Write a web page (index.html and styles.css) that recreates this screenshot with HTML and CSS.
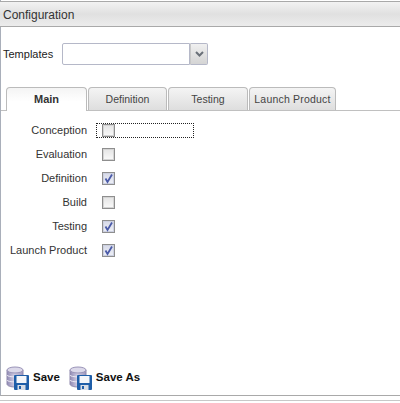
FILE: index.html
```html
<!DOCTYPE html>
<html lang="en">
<head>
  <meta charset="UTF-8">
  <title>Configuration</title>
  <link rel="stylesheet" href="styles.css">
</head>
<body>
  <div class="panel">
    <div class="panel-title">Configuration</div>

    <div class="templates-row">
      <label class="templates-label">Templates</label>
      <div class="combo">
        <div class="combo-text"></div>
        <div class="combo-btn">
          <svg width="9" height="6" viewBox="0 0 9 6"><path d="M1 1 L4.5 4.5 L8 1" fill="none" stroke="#6a7078" stroke-width="2"/></svg>
        </div>
      </div>
    </div>

    <div class="tabs">
      <div class="tab tab-active">Main</div>
      <div class="tab tab-definition">Definition</div>
      <div class="tab tab-testing">Testing</div>
      <div class="tab tab-launch">Launch Product</div>
    </div>

    <div class="form">
      <div class="form-row">
        <span class="form-label">Conception</span>
        <span class="check-wrap check-focus"><span class="check"></span></span>
      </div>
      <div class="form-row">
        <span class="form-label">Evaluation</span>
        <span class="check-wrap"><span class="check"></span></span>
      </div>
      <div class="form-row">
        <span class="form-label">Definition</span>
        <span class="check-wrap"><span class="check check-on"><svg class="tick" width="11" height="11" viewBox="0 0 11 11"><path d="M2.5 5.5 L4.5 9 L9 1.5" fill="none" stroke="#4a5aa8" stroke-width="1.8"/></svg></span></span>
      </div>
      <div class="form-row">
        <span class="form-label">Build</span>
        <span class="check-wrap"><span class="check"></span></span>
      </div>
      <div class="form-row">
        <span class="form-label">Testing</span>
        <span class="check-wrap"><span class="check check-on"><svg class="tick" width="11" height="11" viewBox="0 0 11 11"><path d="M2.5 5.5 L4.5 9 L9 1.5" fill="none" stroke="#4a5aa8" stroke-width="1.8"/></svg></span></span>
      </div>
      <div class="form-row">
        <span class="form-label">Launch Product</span>
        <span class="check-wrap"><span class="check check-on"><svg class="tick" width="11" height="11" viewBox="0 0 11 11"><path d="M2.5 5.5 L4.5 9 L9 1.5" fill="none" stroke="#4a5aa8" stroke-width="1.8"/></svg></span></span>
      </div>
    </div>

    <div class="toolbar">
      <div class="tool-btn">
        <svg width="24" height="24" viewBox="0 0 24 24">
          <defs>
            <linearGradient id="dbBody" x1="0" x2="1" y1="0" y2="0">
              <stop offset="0" stop-color="#8f89b4"/>
              <stop offset="0.45" stop-color="#cfcbe2"/>
              <stop offset="1" stop-color="#9c96bd"/>
            </linearGradient>
          </defs>
          <path d="M1 4 V18 C1 20 5 21 9 21 C13 21 17 20 17 18 V4" fill="url(#dbBody)" stroke="#8f89ad"/>
          <ellipse cx="9" cy="4" rx="8" ry="3" fill="#dcd9ea" stroke="#9a94b8"/>
          <path d="M1 9 C1 11.5 17 11.5 17 9 M1 14 C1 16.5 17 16.5 17 14" fill="none" stroke="#eceaf4"/>
          <rect x="8" y="9" width="15" height="15" rx="1" fill="#1f5ea8"/>
          <rect x="10.5" y="10" width="10" height="7" fill="#f4f6fa"/>
          <rect x="11.5" y="19" width="8" height="5" fill="#d8dde6"/>
          <rect x="13" y="20" width="2" height="3" fill="#1f5ea8"/>
        </svg>
        <span>Save</span>
      </div>
      <div class="tool-btn">
        <svg width="24" height="24" viewBox="0 0 24 24">
          <path d="M1 4 V18 C1 20 5 21 9 21 C13 21 17 20 17 18 V4" fill="url(#dbBody)" stroke="#8f89ad"/>
          <ellipse cx="9" cy="4" rx="8" ry="3" fill="#dcd9ea" stroke="#9a94b8"/>
          <path d="M1 9 C1 11.5 17 11.5 17 9 M1 14 C1 16.5 17 16.5 17 14" fill="none" stroke="#eceaf4"/>
          <rect x="8" y="9" width="15" height="15" rx="1" fill="#1f5ea8"/>
          <rect x="10.5" y="10" width="10" height="7" fill="#f4f6fa"/>
          <rect x="11.5" y="19" width="8" height="5" fill="#d8dde6"/>
          <rect x="13" y="20" width="2" height="3" fill="#1f5ea8"/>
        </svg>
        <span>Save As</span>
      </div>
    </div>
  </div>
  <div class="page-rule"></div>
</body>
</html>
```

FILE: styles.css
```css
/* ExtJS-style config panel */
html, body {
  margin: 0;
  height: 100%;
  background: #fff;
}

body {
  font-family: "Liberation Sans", Arial, sans-serif;
  font-size: 11px;
  color: #222;
  overflow: hidden;
}

.panel {
  height: 394px;
  padding-top: 1px;
  border-left: 1px solid #a9afba;
  border-bottom: 1px solid #a9a9a9;
  display: flex;
  flex-direction: column;
}

.page-rule {
  margin-top: 4px;
  height: 1px;
  background: #c8c8c8;
}

.panel-title {
  height: 24px;
  line-height: 26px;
  margin-left: -1px;
  padding-left: 3px;
  border-top: 1px solid #a9a9a9;
  border-bottom: 1px solid #a9a9a9;
  background: linear-gradient(#f2f2f2, #e0e0e0 50%, #ececec);
  font-size: 12px;
  color: #333;
}

.templates-row {
  display: flex;
  align-items: center;
  margin-top: 16px;
  padding-left: 2px;
}

.templates-label {
  width: 59px;
}

.combo {
  display: flex;
  width: 146px;
  height: 22px;
}

.combo-text {
  flex: 1;
  border: 1px solid #b5b8c8;
  border-radius: 2px 0 0 2px;
  background: #fff;
}

.combo-btn {
  width: 16px;
  border: 1px solid #b5b8c8;
  border-left: 1px solid #c8c8c8;
  border-radius: 0 2px 2px 0;
  background: linear-gradient(#f0f0f0, #d4d4d4);
  display: flex;
  align-items: center;
  justify-content: center;
}

.tabs {
  display: flex;
  margin-top: 22px;
  padding-left: 5px;
  height: 23px;
  border-bottom: 1px solid #c0c0c0;
  gap: 1px;
}

.tab {
  height: 22px;
  line-height: 22px;
  text-align: center;
  border: 1px solid #bbb;
  border-bottom: none;
  border-radius: 4px 4px 0 0;
  background: linear-gradient(#f4f4f4, #dedede);
  font-size: 10.5px;
  color: #444;
}

.tab-active {
  width: 79px;
  height: 23px;
  background: linear-gradient(#f4f4f4, #fff 60%);
  font-weight: bold;
  font-size: 11px;
  color: #333;
}

.tab-definition { width: 77px; }
.tab-testing { width: 78px; }
.tab-launch { width: 85px; letter-spacing: .2px; }

.form {
  padding-top: 7px;
  flex: 1;
}

.form-row {
  display: flex;
  align-items: center;
  height: 24px;
}

.form-label {
  width: 86px;
  text-align: right;
  color: #333;
}

.check-wrap {
  display: flex;
  align-items: center;
  margin-left: 9px;
  width: 98px;
  height: 15px;
  padding-left: 5px;
  box-sizing: border-box;
  border: 1px solid transparent;
}

.check-focus {
  border: 1px dotted #222;
}

.check {
  width: 11px;
  height: 11px;
  border: 1px solid #8e8e8e;
  background: linear-gradient(#e4e4e4, #fafafa);
  box-shadow: inset 0 0 0 1px #d4d4d4;
  display: block;
}

.check-on {
  background: linear-gradient(#d6d9e8, #eef0f6);
  box-shadow: inset 0 0 0 1px #ccd0e0;
}

.tick {
  display: block;
}

.toolbar {
  display: flex;
  gap: 9px;
  padding-left: 5px;
  height: 29px;
}

.tool-btn {
  display: flex;
  align-items: center;
  gap: 3px;
  height: 24px;
  font-weight: bold;
  font-size: 11.5px;
  color: #111;
}

.tool-btn span {
  margin-bottom: 2px;
}
```
